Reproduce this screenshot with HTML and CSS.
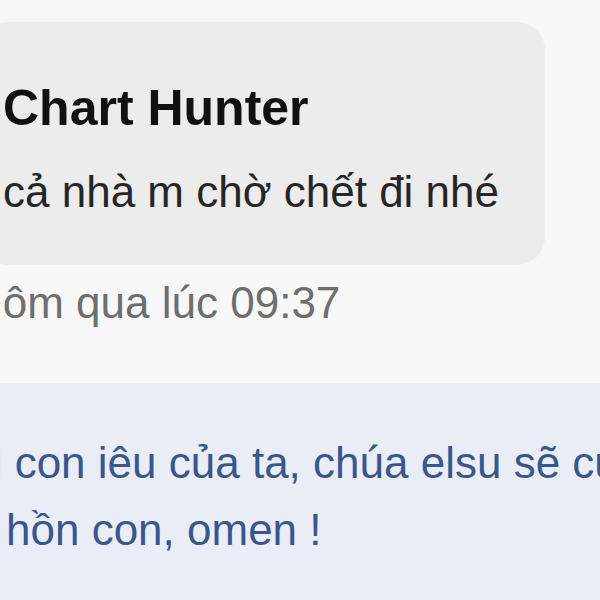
FILE: index.html
```html
<!DOCTYPE html>
<html lang="vi">
<head>
    <meta charset="UTF-8">
    <meta name="viewport" content="width=device-width, initial-scale=1.0">
    <title>Bình luận</title>
    <link rel="stylesheet" href="styles.css">
</head>
<body>
    <div class="thread">
        <div class="comment">
            <div class="bubble">
                <div class="author">Chart Hunter</div>
                <div class="message">cả nhà m chờ chết đi nhé</div>
            </div>
            <div class="time">Hôm qua lúc 09:37</div>
        </div>
    </div>

    <div class="reply">
        <p class="reply_text">Hỡi con iêu của ta, chúa elsu sẽ cứu rỗi linh<br>hồn con, omen !</p>
    </div>
</body>
</html>
```

FILE: styles.css
```css
* {
    margin: 0;
    padding: 0;
    box-sizing: border-box;
}

html, body {
    height: 100%;
}

body {
    background-color: #f7f7f7;
    font-family: "Liberation Sans", Arial, sans-serif;
    overflow: hidden;
    display: flex;
    flex-direction: column;
}

.thread {
    padding-top: 22px;
    padding-bottom: 55px;
}

.bubble {
    background-color: #ececec;
    border-radius: 28px;
    margin-left: -20px;
    margin-right: 55px;
    padding: 57px 20px 45px 23px;
}

.author {
    font-size: 50px;
    font-weight: bold;
    line-height: 58px;
    color: #111;
    margin-bottom: 27px;
}

.message {
    font-size: 44px;
    line-height: 56px;
    color: #262626;
}

.time {
    font-size: 44px;
    line-height: 50px;
    color: #6e6e6e;
    margin-top: 13px;
    margin-left: -29px;
    white-space: nowrap;
}

.reply {
    flex: 1;
    background-color: #e9edf5;
    padding: 46px 0 0 6px;
}

.reply_text {
    font-size: 44px;
    line-height: 67px;
    color: #3a578c;
    white-space: nowrap;
    text-indent: -74px;
}
```
